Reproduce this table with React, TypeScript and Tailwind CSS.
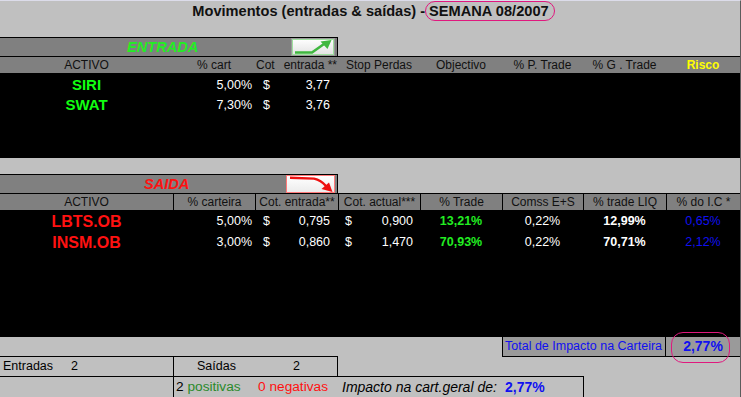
import React from 'react'

const cols = 'grid grid-cols-[173px_82px_83px_82px_82px_81px_83px_1fr]'

const entradas = [
  { activo: 'SIRI', cart: '5,00%', cot: '3,77' },
  { activo: 'SWAT', cart: '7,30%', cot: '3,76' },
]

const saidas = [
  { activo: 'LBTS.OB', cart: '5,00%', entrada: '0,795', actual: '0,900', trade: '13,21%', comss: '0,22%', liq: '12,99%', ic: '0,65%' },
  { activo: 'INSM.OB', cart: '3,00%', entrada: '0,860', actual: '1,470', trade: '70,93%', comss: '0,22%', liq: '70,71%', ic: '2,12%' },
]

const UpArrow = () => (
  <div className='w-[44px] h-[18px] mr-[2px] border border-[#9a9a9a] bg-linear-to-b from-white to-[#e2e2e2]'>
    <svg width='42' height='16' viewBox='0 0 42 16'>
      <rect x='0.5' y='0.5' width='41' height='15' fill='none' stroke='#9fe09f' />
      <path d='M3 13.5 H20 L32 5' stroke='#3fb83f' strokeWidth='2.6' fill='none' />
      <path d='M39.5 1 L28.5 2.5 L35.5 10 Z' fill='#3fb83f' />
    </svg>
  </div>
)

const DownArrow = () => (
  <div className='w-[49px] h-[18px] mr-[2px] border border-[#ff7a7a] bg-linear-to-b from-white to-[#ececec]'>
    <svg width='47' height='16' viewBox='0 0 47 16'>
      <path d='M3 1.8 L27 2.6 Q34 4 39 10' stroke='#ee1111' strokeWidth='2.4' fill='none' />
      <path d='M45.5 16 L34.5 13 L42 6.5 Z' fill='#ee1111' />
    </svg>
  </div>
)

const App = () => {
  return (
    <div className="w-[741px] h-[397px] overflow-hidden bg-[#c0c0c0] border-t border-[#dcdcea] border-r border-r-[#5c5c5c] flex flex-col font-['Liberation_Sans',Arial,sans-serif] text-[12.5px] text-black">
      {/* titulo */}
      <div className='h-[36px] flex justify-center items-start pl-[7px] shrink-0'>
        <p className='text-[14.6px] leading-[18px] font-bold text-[#111] flex items-start'>
          <span className='pt-[1px]'>Movimentos (entradas &amp; saídas) -</span>
          <span className='border border-[#e0187e] rounded-full pl-[3px] pr-[5px]'>SEMANA 08/2007</span>
        </p>
      </div>

      {/* ENTRADA */}
      <div className='h-[19px] flex shrink-0'>
        <div className='w-[338px] bg-[#808080] border-t border-r border-black flex items-center'>
          <span className='pl-[127px] italic font-bold text-[14.6px] leading-[18px] text-[#22ee22]'>ENTRADA</span>
          <div className='ml-auto'>
            <UpArrow />
          </div>
        </div>
      </div>
      <div className={`${cols} h-[17px] bg-[#808080] border-t border-black text-[12px] leading-[16px] text-[#111] shrink-0`}>
        <p className='text-center'>ACTIVO</p>
        <p className='text-center'>% cart</p>
        <p className='flex justify-between pl-[1px] pr-[1px]'><span>Cot</span><span>entrada **</span></p>
        <p className='text-center'>Stop Perdas</p>
        <p className='text-center'>Objectivo</p>
        <p className='text-center'>% P. Trade</p>
        <p className='text-center'>% G . Trade</p>
        <p className='text-center font-bold text-[#ffff00]'>Risco</p>
      </div>
      <div className='h-[85px] bg-black pt-[2px] shrink-0'>
        {entradas.map((e) => (
          <div key={e.activo} className={`${cols} h-[20px] items-center text-white leading-[20px]`}>
            <p className='text-center font-bold text-[15px] text-[#11ff11]'>{e.activo}</p>
            <p className='text-right pr-[3px]'>{e.cart}</p>
            <p className='flex justify-between pl-[8px] pr-[8px]'><span>$</span><span>{e.cot}</span></p>
          </div>
        ))}
      </div>

      <div className='h-[16px] shrink-0' />

      {/* SAIDA */}
      <div className='h-[19px] flex shrink-0'>
        <div className='w-[338px] bg-[#808080] border-t border-r border-black flex items-center'>
          <span className='pl-[144px] italic font-bold text-[14.6px] leading-[18px] text-[#ff1111]'>SAIDA</span>
          <div className='ml-auto'>
            <DownArrow />
          </div>
        </div>
      </div>
      <div className={`${cols} h-[17px] bg-[#808080] border-t border-black text-[12px] leading-[16px] text-[#111] shrink-0`}>
        <p className='text-center'>ACTIVO</p>
        <p className='text-center border-l border-black'>% carteira</p>
        <p className='text-center border-l border-black whitespace-nowrap'>Cot. entrada**</p>
        <p className='text-center border-l border-black whitespace-nowrap'>Cot. actual***</p>
        <p className='text-center border-l border-black'>% Trade</p>
        <p className='text-center border-l border-black'>Comss E+S</p>
        <p className='text-center border-l border-black'>% trade LIQ</p>
        <p className='text-center border-l border-black'>% do I.C *</p>
      </div>
      <div className='h-[127px] bg-black pt-[1px] shrink-0'>
        {saidas.map((s) => (
          <div key={s.activo} className={`${cols} h-[21px] items-center text-white leading-[21px]`}>
            <p className='text-center font-bold text-[16px] text-[#ff1111]'>{s.activo}</p>
            <p className='text-right pr-[3px]'>{s.cart}</p>
            <p className='flex justify-between pl-[8px] pr-[8px]'><span>$</span><span>{s.entrada}</span></p>
            <p className='flex justify-between pl-[7px] pr-[7px]'><span>$</span><span>{s.actual}</span></p>
            <p className='text-center font-bold text-[#22ee22]'>{s.trade}</p>
            <p className='text-center'>{s.comss}</p>
            <p className='text-center font-bold'>{s.liq}</p>
            <p className='text-center text-[#1010f0]'>{s.ic}</p>
          </div>
        ))}
      </div>

      {/* totais */}
      <div className='h-[19px] flex shrink-0'>
        <div className='w-[502px]' />
        <div className='flex-1 flex bg-[#9a9a9a] border-l border-black'>
          <p className='w-[163px] border-r border-black pl-[2px] leading-[19px] text-[#1010f0]'>Total de Impacto na Carteira</p>
          <div className='relative flex-1 text-center'>
            <p className='font-bold text-[14px] leading-[19px] text-[#1010f0]'>2,77%</p>
            <div className='absolute left-[5px] top-[-5px] w-[59px] h-[31px] border border-[#e0187e] rounded-[12px]' />
          </div>
        </div>
      </div>

      <div className='h-[20px] flex shrink-0 leading-[19px]'>
        <div className='w-[338px] flex border-t border-black'>
          <p className='w-[173px] flex'>
            <span className='w-[71px] pl-[3px]'>Entradas</span>
            <span>2</span>
          </p>
          <p className='w-[165px] flex border-l border-r border-black pl-[23px]'>
            <span className='w-[96px]'>Saídas</span>
            <span>2</span>
          </p>
        </div>
        <div className='w-[164px]' />
        <div className='flex-1 border-t border-black' />
      </div>

      <div className='h-[21px] flex shrink-0 leading-[20px] text-[13.7px]'>
        <div className='w-[173px] border-t border-black' />
        <div className='w-[411px] flex border-t border-l border-r border-black'>
          <p className='w-[84px] pl-[2px] whitespace-nowrap'>2 <span className='text-[#2a8a2a]'>positivas</span></p>
          <p className='w-[84px] text-[#ff1111] whitespace-nowrap'>0 negativas</p>
          <p className='w-[163px] italic text-[14px] whitespace-nowrap'>Impacto na cart.geral de:</p>
          <p className='font-bold text-[14px] text-[#1010f0]'>2,77%</p>
        </div>
      </div>
    </div>
  )
}

export default App
